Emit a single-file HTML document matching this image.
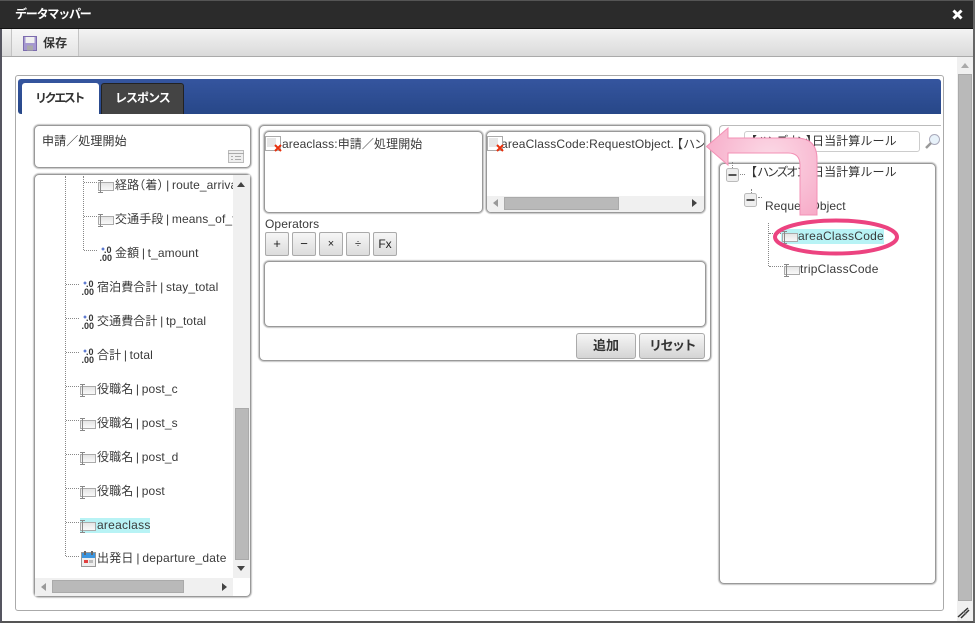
<!DOCTYPE html>
<html lang="ja"><head><meta charset="utf-8"><title>データマッパー</title>
<style>
html,body{margin:0;padding:0;width:975px;height:623px;overflow:hidden;background:#fff}
body{position:relative;font-family:"Liberation Sans","Noto Sans CJK JP",sans-serif;font-size:12px;color:#333}
div{position:absolute;box-sizing:border-box}
.t{position:absolute;white-space:nowrap;line-height:16px;height:16px;color:#3a3a3a;letter-spacing:.1px;word-spacing:-.8px}
.box{border:1px solid #999;border-radius:5px;background:#fff;box-shadow:0 0 1px 1px #c4c4c4}
.op{border:1px solid #aaa;border-radius:2px;width:24px;height:24px;top:232px;background:linear-gradient(#f6f6f6,#dcdcdc);text-align:center;line-height:22px;font-size:13px;color:#222}
.btn{border:1px solid #aaa;border-radius:3px;height:26px;top:333px;background:linear-gradient(#f6f6f6,#d4d4d4);text-align:center;line-height:24px;font-weight:bold;color:#333;font-size:13px}
.h{position:absolute;height:0;border-top:1px dotted #888}
.v{position:absolute;width:0;border-left:1px dotted #888}
.pl{margin-left:-6px}
.pr{margin-right:-6px}
.k{letter-spacing:-1px}
.k2{letter-spacing:-2.2px}
svg{position:absolute;overflow:visible}
</style></head><body>
<svg width="0" height="0" style="left:0;top:0"><defs>
<linearGradient id="sf" x1="0" y1="0" x2="0" y2="1"><stop offset="0" stop-color="#e4e4e4"/><stop offset="1" stop-color="#fafafa"/></linearGradient>
<g id="str"><rect x="1.500" y="3.500" width="15" height="8" fill="url(#sf)" stroke="#aaa"/><path d="M1 1.500h5M3.500 1.500v12M1 13.500h5" stroke="#888" fill="none"/></g>
<g id="err"><rect x="0.500" y="0.500" width="15" height="14" fill="#fff" stroke="#aaa"/><rect x="2" y="2" width="9" height="9" fill="#e6e6e6"/><path d="M10 9l6 6M16 9l-6 6" stroke="#e8300c" stroke-width="2"/></g>
<g id="num"><text x="4" y="6" font-size="9" font-weight="bold" fill="#333" font-family="Liberation Sans">.0</text><text x="-.5" y="14" font-size="9" font-weight="bold" fill="#333" font-family="Liberation Sans">.00</text><path d="M1.500 2h3M3 .5v3" stroke="#2a4fc0"/></g>
</defs></svg>

<!-- window frame -->
<div style="left:0;top:0;width:975px;height:623px;border-left:2px solid #555560;border-right:2px solid #666;border-bottom:2px solid #555"></div>
<div style="left:0;top:0;width:973px;height:29px;background:#2b2b2b;border-top:1px solid #555;border-bottom:1px solid #111"></div>
<div class="t" style="left:15px;top:6px;color:#fff;font-weight:bold;letter-spacing:-1.2px">データマッパー</div>
<svg style="left:952px;top:9px" width="11" height="11"><path d="M1.500 1.500l8 8M9.500 1.500l-8 8" stroke="#fff" stroke-width="3"/></svg>

<!-- toolbar -->
<div style="left:2px;top:29px;width:971px;height:28px;background:linear-gradient(#f3f3f3,#dadada);border-bottom:1px solid #aaa"></div>
<div style="left:11px;top:29px;width:68px;height:27px;background:linear-gradient(#f7f7f7,#e4e4e4);border-left:1px solid #c4c4c4;border-right:1px solid #c4c4c4"></div>
<svg style="left:23px;top:36px" width="14" height="15"><rect x=".5" y=".5" width="13" height="14" fill="#a598d0" stroke="#7c6cae"/><rect x="2.500" y="1" width="9" height="6" fill="#f0f0f0"/><rect x="4" y="9.500" width="6" height="5" fill="#aaa"/></svg>
<div class="t" style="left:43px;top:35px;font-weight:bold;color:#333">保存</div>

<!-- page scrollbar -->
<div style="left:957px;top:57px;width:16px;height:564px;background:#f0f0f0"></div>
<div style="left:958px;top:74px;width:14px;height:527px;background:#b9b9b9;border:1px solid #aaa"></div>
<svg style="left:961px;top:63px" width="8" height="6"><path d="M4 0l4 5H0z" fill="#aaa"/></svg>
<svg style="left:957px;top:607px" width="14" height="12"><path d="M1 10L11 1M4 11l8-8" stroke="#333" stroke-width="1.500"/><path d="M6 4l3 4" stroke="#888"/></svg>

<!-- main panel -->
<div style="left:15px;top:75px;width:929px;height:536px;border:1px solid #aaa;border-radius:3px;background:#fff"></div>
<div style="left:18px;top:79px;width:923px;height:35px;border-radius:3px 3px 0 3px;background:linear-gradient(#35559f,#274788)"></div>
<div style="left:22px;top:83px;width:77px;height:32px;background:#fff;border-radius:3px 3px 0 0"></div>
<div class="t" style="left:35px;top:90px;font-weight:bold;color:#333;letter-spacing:-2.4px">リクエスト</div>
<div style="left:101px;top:83px;width:83px;height:31px;background:#444;border:1px solid #222;border-bottom:0;border-radius:3px 3px 0 0"></div>
<div class="t" style="left:115px;top:90px;font-weight:bold;color:#fff;letter-spacing:-1px">レスポンス</div>

<!-- left top box -->
<div class="box" style="left:34px;top:125px;width:217px;height:43px"></div>
<div class="t" style="left:42px;top:133px;color:#333">申請／処理開始</div>
<svg style="left:228px;top:150px" width="16" height="13"><rect x=".5" y=".5" width="15" height="12" fill="#eee" stroke="#bbb"/><path d="M0 3.500h16M3 6.500h2M7 6.500h6M3 9.500h2M7 9.500h6" stroke="#aaa"/></svg>

<!-- left tree box -->
<div class="box" style="left:34px;top:174px;width:217px;height:423px"></div>
<div style="left:233px;top:175px;width:17px;height:403px;background:#f0f0f0"></div>
<div style="left:35px;top:578px;width:198px;height:18px;background:#f0f0f0"></div>
<div style="left:235px;top:408px;width:14px;height:152px;background:#b9b9b9;border:1px solid #aaa"></div>
<div style="left:52px;top:580px;width:132px;height:13px;background:#b9b9b9;border:1px solid #aaa"></div>
<svg style="left:237px;top:182px" width="8" height="5"><path d="M4 0l4 5H0z" fill="#444"/></svg>
<svg style="left:237px;top:566px" width="8" height="5"><path d="M4 5l4-5H0z" fill="#444"/></svg>
<svg style="left:41px;top:583px" width="5" height="8"><path d="M0 4l5-4v8z" fill="#999"/></svg>
<svg style="left:222px;top:583px" width="5" height="8"><path d="M5 4L0 0v8z" fill="#444"/></svg>

<div class="v" style="left:65px;top:176px;height:380px"></div>
<div class="v" style="left:83px;top:176px;height:74px"></div>
<div class="h" style="left:84px;top:182px;width:13px"></div>
<div class="h" style="left:84px;top:216px;width:13px"></div>
<div class="h" style="left:84px;top:250px;width:13px"></div>
<div class="h" style="left:66px;top:284px;width:13px"></div>
<div class="h" style="left:66px;top:318px;width:13px"></div>
<div class="h" style="left:66px;top:352px;width:13px"></div>
<div class="h" style="left:66px;top:386px;width:13px"></div>
<div class="h" style="left:66px;top:420px;width:13px"></div>
<div class="h" style="left:66px;top:454px;width:13px"></div>
<div class="h" style="left:66px;top:488px;width:13px"></div>
<div class="h" style="left:66px;top:522px;width:13px"></div>
<div class="h" style="left:66px;top:556px;width:13px"></div>

<div style="left:80px;top:518px;width:70px;height:15px;background:#b8f3f5"></div>

<svg style="left:97px;top:179px" width="17" height="15"><use href="#str"/></svg>
<svg style="left:97px;top:213px" width="17" height="15"><use href="#str"/></svg>
<svg style="left:100px;top:247px" width="13" height="15"><use href="#num"/></svg>
<svg style="left:82px;top:281px" width="13" height="15"><use href="#num"/></svg>
<svg style="left:82px;top:315px" width="13" height="15"><use href="#num"/></svg>
<svg style="left:82px;top:349px" width="13" height="15"><use href="#num"/></svg>
<svg style="left:79px;top:383px" width="17" height="15"><use href="#str"/></svg>
<svg style="left:79px;top:417px" width="17" height="15"><use href="#str"/></svg>
<svg style="left:79px;top:451px" width="17" height="15"><use href="#str"/></svg>
<svg style="left:79px;top:485px" width="17" height="15"><use href="#str"/></svg>
<svg style="left:79px;top:519px" width="17" height="15"><use href="#str"/></svg>
<svg style="left:81px;top:551px" width="15" height="16"><rect x=".5" y="1.500" width="14" height="14" fill="#eee" stroke="#999"/><rect x="1" y="2" width="13" height="5" fill="#3d96e0"/><rect x="3" y="0" width="2" height="4" fill="#666"/><rect x="10" y="0" width="2" height="4" fill="#666"/><rect x="3" y="9" width="4" height="3" fill="#e04040"/><rect x="8" y="9" width="4" height="3" fill="#bbb"/></svg>

<div style="left:97px;top:176px;width:136px;height:402px;overflow:hidden;background:transparent">
<div class="t" style="left:18px;top:1px">経路<span class="pl">（</span>着<span class="pr">）</span> | route_arrival</div>
<div class="t" style="left:18px;top:35px">交通手段 | means_of_transport</div>
<div class="t" style="left:18px;top:69px">金額 | t_amount</div>
<div class="t" style="left:0;top:103px">宿泊費合計 | stay_total</div>
<div class="t" style="left:0;top:137px">交通費合計 | tp_total</div>
<div class="t" style="left:0;top:171px">合計 | total</div>
<div class="t" style="left:0;top:205px">役職名 | post_c</div>
<div class="t" style="left:0;top:239px">役職名 | post_s</div>
<div class="t" style="left:0;top:273px">役職名 | post_d</div>
<div class="t" style="left:0;top:307px">役職名 | post</div>
<div class="t" style="left:0;top:341px;letter-spacing:.25px">areaclass</div>
<div class="t" style="left:0;top:374px;letter-spacing:.2px">出発日 | departure_date</div>
</div>

<!-- centre panel -->
<div class="box" style="left:259px;top:125px;width:452px;height:236px"></div>
<div class="box" style="left:264px;top:131px;width:219px;height:82px"></div>
<svg style="left:265px;top:136px" width="16" height="16"><use href="#err"/></svg>
<div class="t" style="left:282px;top:136px">areaclass:申請／処理開始</div>
<div class="box" style="left:486px;top:131px;width:219px;height:82px;overflow:hidden">
<div style="left:0;top:64px;width:217px;height:16px;background:#f0f0f0"></div>
<div style="left:17px;top:65px;width:115px;height:13px;background:#b9b9b9;border:1px solid #aaa"></div>
<div class="t" style="left:14px;top:4px;letter-spacing:.15px">areaClassCode:RequestObject.<span class="pl" style="margin-left:-3px">【</span><span class="k">ハンズオン</span>】日当計算ルール</div>
</div>
<svg style="left:487px;top:136px" width="16" height="16"><use href="#err"/></svg>
<svg style="left:493px;top:199px" width="5" height="8"><path d="M0 4l5-4v8z" fill="#999"/></svg>
<svg style="left:692px;top:199px" width="5" height="8"><path d="M5 4L0 0v8z" fill="#444"/></svg>
<div class="t" style="left:265px;top:216px">Operators</div>
<div class="op" style="left:265px">+</div>
<div class="op" style="left:292px">−</div>
<div class="op" style="left:319px;font-size:11px">×</div>
<div class="op" style="left:346px;font-size:11px">÷</div>
<div class="op" style="left:373px;font-size:12px">Fx</div>
<div class="box" style="left:264px;top:261px;width:442px;height:66px"></div>
<div class="btn" style="left:576px;width:60px">追加</div>
<div class="btn" style="left:639px;width:66px;letter-spacing:-1.5px">リセット</div>

<!-- right side -->
<div style="left:719px;top:125px;width:222px;height:32px;border:1px solid #bbb;border-right:0;border-bottom:0;border-radius:4px 0 0 0"></div>
<div style="left:744px;top:131px;width:176px;height:21px;border:1px solid #ccc;border-radius:3px;background:#fff"></div>
<div class="t" style="left:745px;top:133px;color:#333">【<span class="k2">ハンズオン</span><span class="pr">】</span>日当計算ルール</div>
<svg style="left:924px;top:133px" width="17" height="17"><circle cx="10.500" cy="6.500" r="5" fill="#e8f2fa" stroke="#aab"/><path d="M7 10l-5 5" stroke="#999" stroke-width="2.500"/></svg>
<div class="box" style="left:719px;top:163px;width:217px;height:421px"></div>
<div class="v" style="left:732px;top:162px;height:6px"></div>
<div class="h" style="left:740px;top:174px;width:5px"></div>
<div class="v" style="left:751px;top:189px;height:4px"></div>
<div class="h" style="left:758px;top:197px;width:4px"></div>
<div class="v" style="left:768px;top:223px;height:43px"></div>
<div class="h" style="left:769px;top:266px;width:14px"></div>
<div class="h" style="left:769px;top:233px;width:12px"></div>
<svg style="left:726px;top:168px" width="14" height="14"><rect x=".5" y=".5" width="12" height="13" rx="2" fill="#eee" stroke="#bbb"/><rect x="2.500" y="6" width="8" height="2" fill="#555"/></svg>
<svg style="left:744px;top:193px" width="14" height="14"><rect x=".5" y=".5" width="12" height="13" rx="2" fill="#eee" stroke="#bbb"/><rect x="2.500" y="6" width="8" height="2" fill="#555"/></svg>
<div class="t" style="left:745px;top:164px;color:#333">【<span class="k2">ハンズオン</span><span class="pr">】</span>日当計算ルール</div>
<div class="t" style="left:765px;top:198px">RequestObject</div>
<div style="left:781px;top:229px;width:103px;height:15px;background:#b8f3f5"></div>
<svg style="left:781px;top:230px" width="17" height="15"><use href="#str"/></svg>
<div class="t" style="left:798px;top:228px;letter-spacing:.25px">areaClassCode</div>
<svg style="left:783px;top:263px" width="17" height="15"><use href="#str"/></svg>
<div class="t" style="left:800px;top:261px;letter-spacing:.25px">tripClassCode</div>

<!-- annotations -->
<svg style="left:0;top:0" width="975" height="623">
<defs><radialGradient id="pk" gradientUnits="userSpaceOnUse" cx="770" cy="160" r="75"><stop offset="0" stop-color="#fbdbe7"/><stop offset="1" stop-color="#f7a8c6"/></radialGradient></defs>
<path d="M706.500 146.500L728 128v10h68q21 0 21 21v56h-17v-50q0-12-12-12h-60v12z" fill="url(#pk)" stroke="#f390b5" stroke-width="1"/>
<ellipse cx="836" cy="237" rx="61" ry="16.500" fill="none" stroke="#ec4380" stroke-width="4"/>
</svg>
</body></html>
